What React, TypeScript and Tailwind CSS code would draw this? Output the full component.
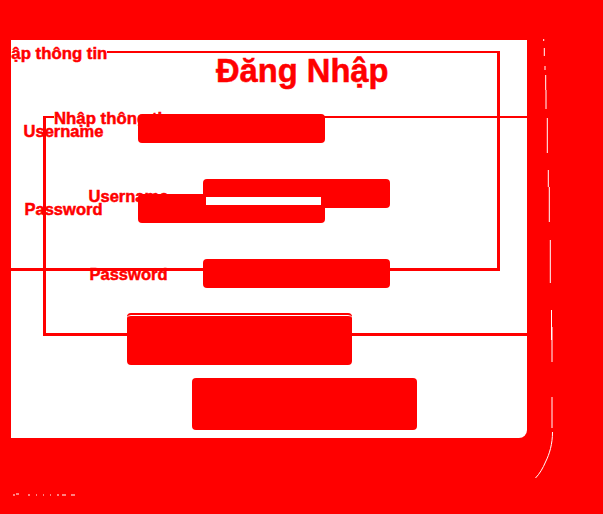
const FONT = "font-['Liberation_Sans',Arial,sans-serif]";
const LABEL = 'w-[149px] text-center text-[16.5px] font-bold text-[#f00] [-webkit-text-stroke:0.5px_#f00]';

function LoginBox({ sheen = false }: { sheen?: boolean }) {
  return (
    <div className="w-[586px] [grid-area:1/1]">
      <fieldset className="h-[230px] w-[522px] border-[3px] border-t-2 border-[#f00] pl-2 pr-2">
        <legend className="pt-1 text-[16.8px] font-bold leading-[18px] text-[#f00] [-webkit-text-stroke:0.5px_#f00]">Nhập thông tin</legend>
        <div className="flex items-center pt-[51px]">
          <label className={`${LABEL} self-end leading-[23px]`}>Username</label>
          <input className="h-[29px] w-[187px] rounded-sm bg-[#f00]" />
        </div>
        <div className="mt-[51px] flex items-center">
          <label className={`${LABEL} leading-[24px]`}>Password</label>
          <input className="h-[29px] w-[187px] rounded-sm bg-[#f00]" />
        </div>
      </fieldset>
      <button
        className={`ml-[149px] mt-[42px] block h-[52px] w-[225px] rounded bg-[#f00] ${
          sheen ? 'border-t-2 border-[#f00] shadow-[inset_0_1px_0_#fff]' : ''
        }`}
      />
    </div>
  );
}

export default function App() {
  return (
    <div className={`relative h-[514px] w-[603px] overflow-hidden bg-[#f00] pl-[11px] pt-10 ${FONT}`}>
      <div className="relative h-[398px] w-[516px] overflow-hidden rounded-br-lg bg-white">
        <div className="-ml-[33px] grid grid-cols-1">
          <div className="mt-px [grid-area:1/1]">
            <LoginBox sheen />
          </div>
          <div className="ml-[65px] mt-[66px] [grid-area:1/1]">
            <LoginBox />
          </div>
        </div>
        <h1 className="absolute left-[205px] top-[12px] text-[32.7px] font-bold leading-[37px] text-[#f00] [-webkit-text-stroke:0.5px_#f00]">Đăng Nhập</h1>
        <div className="absolute left-[195px] top-[157px] h-2 w-[115px] bg-white" />
      </div>

      {/* hairline left over along the right edge */}
      <svg className="absolute left-0 top-0" width="603" height="514" fill="none" stroke="#fff" strokeWidth="1">
        <path d="M543.7 39v2M544.3 48v8M545 66v4M545.7 75v15M546 90v19M547.3 118v35M548.3 170v17M549.3 187v35M550.3 240v43" />
        <path d="M551.5 310v30M552 327v35M552 397v31M552.5 432c0 12-3 22-7 30c-2.500 6-6 12-10 16" />
        <path d="M13 495h2M16 494h3M28 495h2M36 495h1M43 495h1M50 495h1M57 495h2M62 495h4M71 495h4" />
      </svg>
    </div>
  );
}
